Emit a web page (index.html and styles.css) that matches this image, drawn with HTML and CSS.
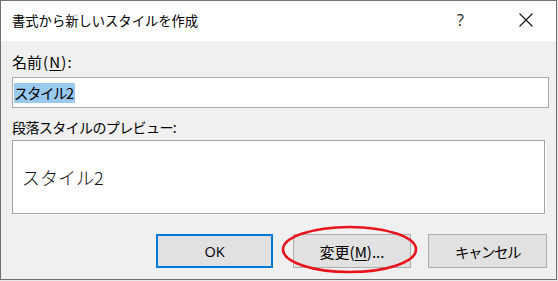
FILE: index.html
```html
<!DOCTYPE html>
<html lang="ja">
<head>
<meta charset="utf-8">
<link rel="stylesheet" href="styles.css">
</head>
<body>
<div class="window">
  <div class="titlebar">
    <span class="title">書式から新しいスタイルを作成</span>
    <span class="help">?</span>
    <svg class="close" width="14" height="14" viewBox="0 0 14 14"><path d="M0.5 0.5 L13.5 13.5 M13.5 0.5 L0.5 13.5" stroke="#111" stroke-width="1.1" fill="none"/></svg>
  </div>
  <div class="content">
    <div class="label label1">名前<span class="latin">(<u>N</u>):</span></div>
    <div class="input"><span class="sel">スタイル2</span></div>
    <div class="label label2">段落スタイルのプレビュー:</div>
    <div class="preview">スタイル2</div>
    <div class="buttons">
      <div class="btn ok">OK</div>
      <div class="btn change">変更(<u>M</u>)...</div>
      <div class="btn cancel">キャンセル</div>
    </div>
  </div>
  <svg class="mark" width="137" height="49" viewBox="0 0 137 49"><ellipse cx="68.5" cy="24.5" rx="66.5" ry="22.5" fill="none" stroke="#e8141c" stroke-width="2.6"/></svg>
</div>
</body>
</html>
```
FILE: styles.css
```css
html, body {
  margin: 0;
  padding: 0;
  background: #e9e9e9;
  font-family: "Noto Sans CJK JP", "Noto Sans", sans-serif;
  color: #000;
}
.window {
  position: relative;
  width: 555px;
  height: 278px;
  border: 1px solid #707070;
  background: #f0f0f0;
  display: flex;
  flex-direction: column;
}
.titlebar {
  height: 40px;
  background: #fff;
  display: flex;
  align-items: center;
  padding-left: 11px;
  flex: none;
}
.title {
  font-size: 13.3px;
  line-height: 20px;
  flex: 1;
  margin-top: -1px;
}
.help {
  font-family: "Open Sans", "Noto Sans", sans-serif;
  font-size: 16px;
  line-height: 20px;
  width: 12px;
  margin-right: 50px;
  color: #222;
  margin-top: -2px;
}
.close {
  margin-right: 23px;
  margin-top: -2px;
}
.content {
  padding: 11px 9px 0 11px;
  display: flex;
  flex-direction: column;
}
.label {
  font-size: 14.5px;
  line-height: 20px;
  height: 20px;
  margin-bottom: 5px;
}
.label1 {
  font-size: 15px;
}
.latin {
  letter-spacing: 1.2px;
  padding-left: 1px;
}
.label u {
  text-decoration-thickness: 1px;
  text-underline-offset: 2px;
}
.label2 {
  margin-top: 9px;
  margin-bottom: 3px;
  font-size: 14px;
  letter-spacing: -0.6px;
}
.input {
  height: 29px;
  width: 534px;
  border: 1px solid #a9a9a9;
  background: #fff;
  display: flex;
  align-items: center;
  padding-left: 1px;
}
.sel {
  background: #99c9ef;
  font-size: 14.5px;
  line-height: 20px;
  letter-spacing: -1.5px;
  padding-right: 2px;
}
.preview {
  height: 72px;
  width: 522px;
  border: 1px solid #a0a0a0;
  box-shadow: 1px 1px 0 #fff;
  background: #fff;
  display: flex;
  align-items: center;
  padding-left: 9px;
  font-size: 18px;
  font-weight: 300;
  color: #111;
}
.buttons {
  display: flex;
  justify-content: flex-end;
  margin-top: 20px;
}
.btn {
  box-sizing: border-box;
  height: 34px;
  background: #e1e1e1;
  border: 1px solid #adadad;
  display: flex;
  align-items: center;
  justify-content: center;
  font-size: 14.5px;
  color: #000;
}
.btn u {
  text-decoration-thickness: 1px;
  text-underline-offset: 2px;
}
.ok {
  width: 117px;
  border: 2px solid #0078d7;
  font-family: "Open Sans", "Noto Sans", sans-serif;
  font-size: 14.5px;
}
.change {
  width: 118px;
  margin-left: 20px;
  font-size: 15px;
}
.cancel {
  width: 119px;
  margin-left: 17px;
  letter-spacing: -1.5px;
}
.mark {
  position: absolute;
  left: 280px;
  top: 224px;
}
```
